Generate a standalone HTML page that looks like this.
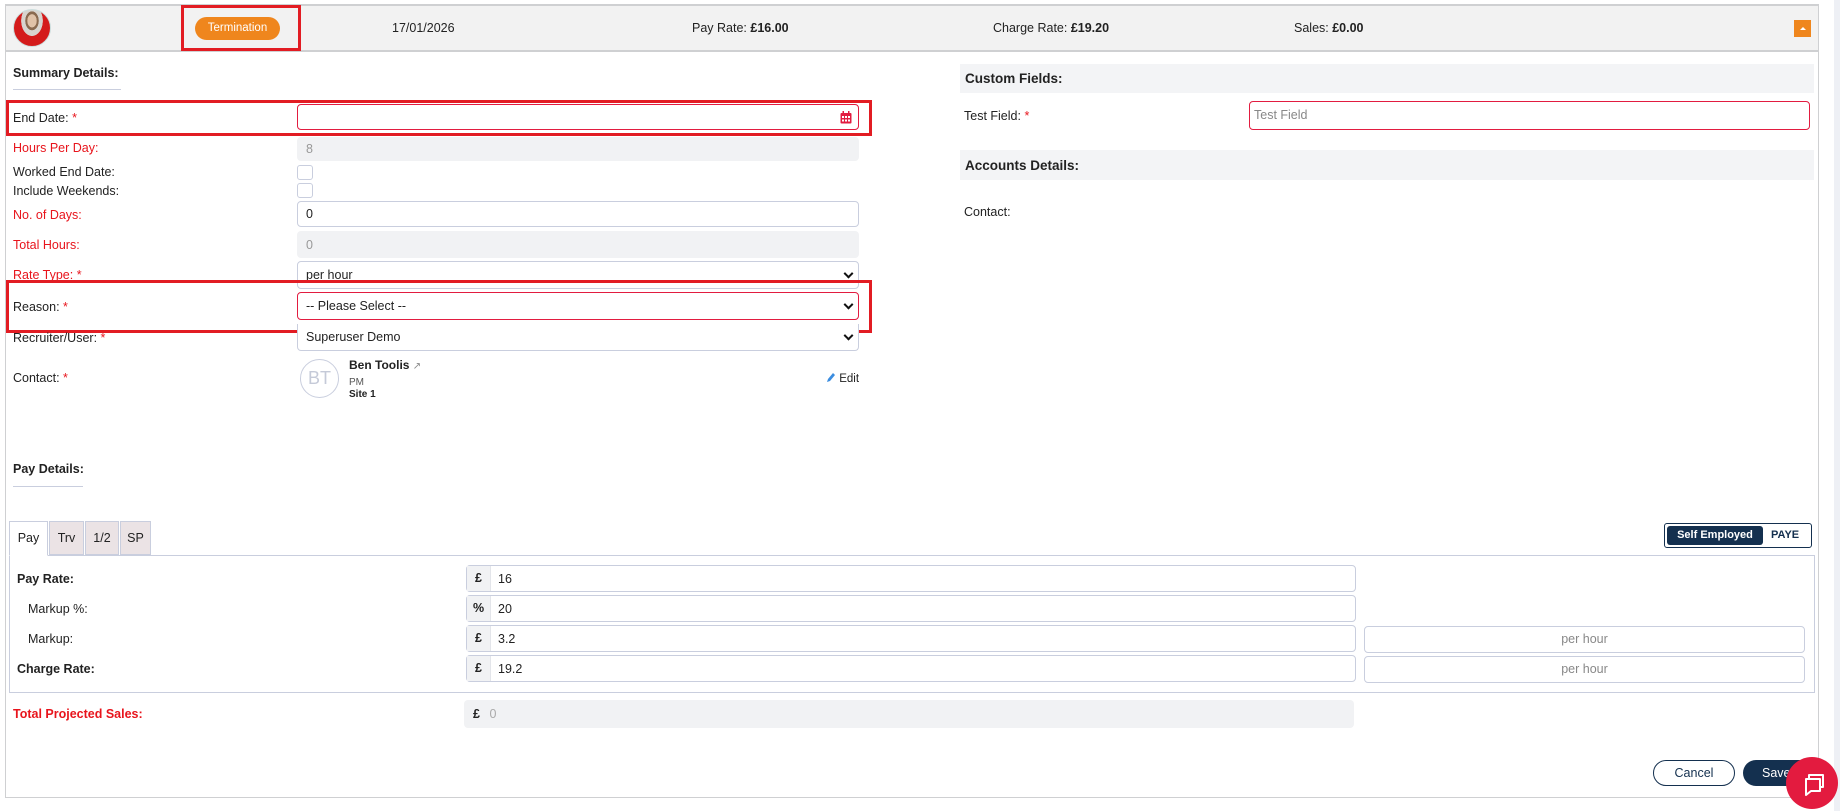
<!DOCTYPE html>
<html><head><meta charset="utf-8"><style>
*{box-sizing:border-box;margin:0;padding:0}
body{width:1840px;height:811px;background:#fff;font-family:"Liberation Sans",sans-serif;font-size:12.5px;color:#222;position:relative;overflow:hidden}
.a{position:absolute}
.lbl{position:absolute;left:13px;font-size:12.5px;color:#222}
.red{color:#e8141c}
.st{color:#e8141c}
.inp{position:absolute;left:297px;width:562px;border:1px solid #c9cede;border-radius:4px;background:#fff;padding-left:8px;font-size:12.5px;display:flex;align-items:center}
.gr{background:#f1f2f4;border-color:#f1f2f4;color:#999}
.chev{position:absolute;right:6px;top:50%;width:7px;height:7px;border-right:2px solid #111;border-bottom:2px solid #111;transform:translateY(-70%) rotate(45deg)}
.band{position:absolute;left:960px;width:854px;background:#f3f4f6;font-weight:bold;font-size:13.5px;padding-left:5px;display:flex;align-items:center}
.rbox{position:absolute;border:3px solid #e21c23}
.pin{position:absolute;left:466px;width:890px;height:27px;border:1px solid #c9cede;border-radius:4px;display:flex;align-items:center;font-size:12.5px}
.pin b{display:inline-block;width:24px;height:100%;background:#f1f2f4;text-align:center;line-height:25px;border-right:1px solid #e3e5ea;margin-right:7px}
.ph{position:absolute;left:1364px;width:441px;height:27px;border:1px solid #c9cede;border-radius:4px;color:#888;text-align:center;line-height:25px}
</style></head><body>
<div class="a" style="left:5px;top:4px;width:1814px;height:794px;border:1px solid #cfd0d2;border-top-width:2px"></div>
<div class="a" style="left:1834px;top:0;width:6px;height:811px;background:#eef0f5"></div>
<div class="a" style="left:6px;top:6px;width:1812px;height:46px;background:#f2f2f2;border-bottom:2px solid #cfd0d2"></div>
<div class="a" style="left:13px;top:9px;width:38px;height:38px;border-radius:50%;background:radial-gradient(ellipse at 50% 30%,#e0c2a8 0 18%,#8a6a50 19% 26%,#d8d4cf 27% 42%,#d41b1b 43%);border:1px solid #cdd"></div>
<div class="a" style="left:195px;top:17px;width:85px;height:23px;border-radius:12px;background:#ef861d;color:#fff;font-size:11.5px;text-align:center;line-height:23px">Termination</div>
<div class="rbox" style="left:181px;top:5px;width:120px;height:46px"></div>
<div class="a" style="left:392px;top:21px;font-size:12.5px">17/01/2026</div>
<div class="a" style="left:692px;top:21px">Pay Rate: <b>£16.00</b></div>
<div class="a" style="left:993px;top:21px">Charge Rate: <b>£19.20</b></div>
<div class="a" style="left:1294px;top:21px">Sales: <b>£0.00</b></div>
<div class="a" style="left:1794px;top:20px;width:17px;height:17px;background:#ef861d"><div style="margin:7px auto 0;width:0;height:0;border-left:3px solid transparent;border-right:3px solid transparent;border-bottom:3px solid #fff"></div></div>
<div class="a" style="left:13px;top:66px;font-weight:bold;font-size:12.5px">Summary Details:</div>
<div class="a" style="left:13px;top:89px;width:108px;height:1px;background:#c9cede"></div>
<div class="lbl" style="top:111px">End Date: <span class="st">*</span></div>
<div class="inp" style="top:104px;height:26px;border-color:#e21c40"><svg class="a" style="right:6px;top:6px" width="12" height="13" viewBox="0 0 12 13"><rect x="0.5" y="2" width="11" height="10.5" rx="1" fill="#e21c40"/><rect x="2.5" y="0" width="1.5" height="3" fill="#e21c40"/><rect x="8" y="0" width="1.5" height="3" fill="#e21c40"/><g fill="#fff"><rect x="2" y="5" width="2" height="2"/><rect x="5" y="5" width="2" height="2"/><rect x="8" y="5" width="2" height="2"/><rect x="2" y="8.5" width="2" height="2"/><rect x="5" y="8.5" width="2" height="2"/><rect x="8" y="8.5" width="2" height="2"/></g></svg></div>
<div class="rbox" style="left:6px;top:100px;width:866px;height:36px"></div>
<div class="lbl red" style="top:141px">Hours Per Day:</div>
<div class="inp gr" style="top:137px;height:24px">8</div>
<div class="lbl" style="top:165px">Worked End Date:</div>
<div class="a" style="left:297px;top:165px;width:16px;height:15px;border:1px solid #c9cede;border-radius:3px"></div>
<div class="lbl" style="top:184px">Include Weekends:</div>
<div class="a" style="left:297px;top:183px;width:16px;height:15px;border:1px solid #c9cede;border-radius:3px"></div>
<div class="lbl red" style="top:208px">No. of Days:</div>
<div class="inp" style="top:201px;height:26px">0</div>
<div class="lbl red" style="top:238px">Total Hours:</div>
<div class="inp gr" style="top:231px;height:27px">0</div>
<div class="lbl red" style="top:268px">Rate Type: *</div>
<div class="inp" style="top:261px;height:28px;align-items:flex-start;padding-top:6px">per hour<span class="chev"></span></div>
<div class="lbl" style="top:300px">Reason: <span class="st">*</span></div>
<div class="inp" style="top:292px;height:28px;border-color:#e21c40">-- Please Select --<span class="chev"></span></div>
<div class="rbox" style="left:6px;top:280px;width:866px;height:53px"></div>
<div class="lbl" style="top:331px">Recruiter/User: <span class="st">*</span></div>
<div class="inp" style="top:324px;height:27px;border-top:none;border-radius:0 0 4px 4px">Superuser Demo<span class="chev"></span></div>
<div class="lbl" style="top:371px">Contact: <span class="st">*</span></div>
<div class="a" style="left:300px;top:359px;width:39px;height:39px;border:1px solid #c9cede;border-radius:50%;color:#c5cad8;font-size:18px;text-align:center;line-height:37px">BT</div>
<div class="a" style="left:349px;top:358px;font-weight:bold;font-size:12px">Ben Toolis <span style="font-weight:normal;color:#888;font-size:10px">↗</span></div>
<div class="a" style="left:349px;top:377px;font-size:10px;color:#555">PM</div>
<div class="a" style="left:349px;top:389px;font-size:10px;font-weight:bold">Site 1</div>
<div class="a" style="left:826px;top:372px;font-size:11.5px"><svg width="10" height="11" viewBox="0 0 10 11" style="vertical-align:-1px"><path d="M1 10l1-3 5-6 2 2-5 6z" fill="#3b8de0"/></svg> Edit</div>
<div class="band" style="top:64px;height:29px">Custom Fields:</div>
<div class="a" style="left:964px;top:109px">Test Field: <span class="st">*</span></div>
<div class="a" style="left:1249px;top:101px;width:561px;height:29px;border:1px solid #e21c40;border-radius:4px;color:#888;padding:6px 4px">Test Field</div>
<div class="band" style="top:150px;height:30px">Accounts Details:</div>
<div class="a" style="left:964px;top:205px">Contact:</div>
<div class="a" style="left:13px;top:462px;font-weight:bold">Pay Details:</div>
<div class="a" style="left:13px;top:486px;width:70px;height:1px;background:#c9cede"></div>
<div class="a" style="left:9px;top:555px;width:1806px;height:138px;border:1px solid #c9cede"></div>
<div class="a" style="left:9px;top:521px;width:39px;height:35px;border:1px solid #c9cede;border-bottom:1px solid #fff;background:#fff;text-align:center;line-height:33px">Pay</div>
<div class="a" style="left:49px;top:521px;width:35px;height:34px;border:1px solid #c9cede;background:#ebe3e5;text-align:center;line-height:33px">Trv</div>
<div class="a" style="left:85px;top:521px;width:34px;height:34px;border:1px solid #c9cede;background:#ebe3e5;text-align:center;line-height:33px">1/2</div>
<div class="a" style="left:120px;top:521px;width:31px;height:34px;border:1px solid #c9cede;background:#ebe3e5;text-align:center;line-height:33px">SP</div>
<div class="a" style="left:1664px;top:523px;width:148px;height:25px;border:1px solid #14304f;border-radius:3px"></div>
<div class="a" style="left:1667px;top:526px;width:96px;height:19px;background:#14304f;border-radius:3px;color:#fff;font-weight:bold;font-size:11px;text-align:center;line-height:19px">Self Employed</div>
<div class="a" style="left:1771px;top:529px;font-weight:bold;font-size:11px;color:#14304f">PAYE</div>
<div class="a" style="left:17px;top:572px;font-weight:bold">Pay Rate:</div>
<div class="pin" style="top:565px"><b>£</b>16</div>
<div class="a" style="left:28px;top:602px">Markup %:</div>
<div class="pin" style="top:595px"><b>%</b>20</div>
<div class="a" style="left:28px;top:632px">Markup:</div>
<div class="pin" style="top:625px"><b>£</b>3.2</div>
<div class="ph" style="top:626px">per hour</div>
<div class="a" style="left:17px;top:662px;font-weight:bold">Charge Rate:</div>
<div class="pin" style="top:655px"><b>£</b>19.2</div>
<div class="ph" style="top:656px">per hour</div>
<div class="a" style="left:13px;top:707px;font-weight:bold;color:#e8141c">Total Projected Sales:</div>
<div class="a" style="left:464px;top:700px;width:890px;height:28px;background:#f1f2f4;border-radius:4px;padding:7px 9px;font-weight:bold">£ <span style="font-weight:normal;color:#aaa;margin-left:6px">0</span></div>
<div class="a" style="left:1653px;top:760px;width:82px;height:26px;border:1px solid #14304f;border-radius:14px;text-align:center;line-height:24px;color:#14304f">Cancel</div>
<div class="a" style="left:1743px;top:760px;width:76px;height:26px;background:#14304f;border-radius:14px;color:#fff;line-height:26px;padding-left:19px">Save</div>
<div class="a" style="left:1786px;top:757px;width:52px;height:52px;border-radius:50%;background:#e31b3f">
<svg width="52" height="52" viewBox="0 0 52 52"><path d="M20 22h14v12h-9l-5 4z" fill="none" stroke="#fff" stroke-width="2" stroke-linejoin="round"/><path d="M23 22v-4h14v12h-3" fill="none" stroke="#fff" stroke-width="2" stroke-linejoin="round"/></svg></div>
</body></html>
